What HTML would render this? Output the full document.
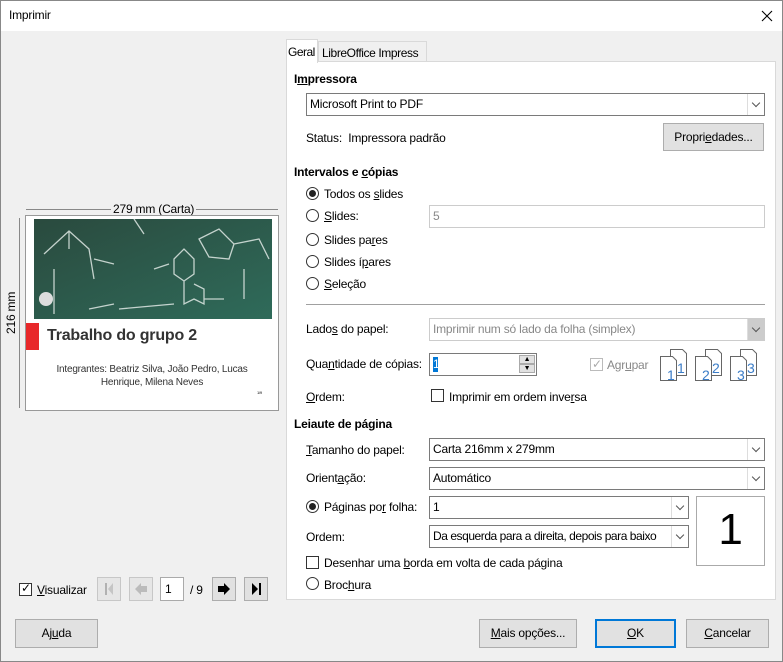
<!DOCTYPE html>
<html><head><meta charset="utf-8"><style>
*{box-sizing:border-box;margin:0;padding:0}
body{width:783px;height:662px;background:#f0f0f0;font-family:"Liberation Sans",sans-serif;font-size:12px;letter-spacing:-0.2px;color:#000;position:relative;overflow:hidden}
.a{position:absolute;white-space:nowrap}
.t{position:absolute;white-space:nowrap;line-height:14px}
.b{font-weight:bold}
.sel{position:absolute;background:#fff;border:1px solid #7a7a7a;height:23px;padding:3px 0 0 3px;line-height:15px;overflow:hidden}
.sel .ar{position:absolute;right:0;top:0;width:17px;height:21px;border-left:1px solid #ddd;background:#fff}
.sel .ar:after{content:"";position:absolute;left:5px;top:6px;width:5px;height:5px;border-right:1px solid #555;border-bottom:1px solid #555;transform:rotate(45deg)}
.dis{border-color:#ccc;color:#888}
.dis .ar{background:#ccc}
.btn{position:absolute;background:#e1e1e1;border:1px solid #adadad;text-align:center;line-height:27px}
.rad{position:absolute;width:13px;height:13px;border:1px solid #333;border-radius:50%;background:#fff}
.rad.on:after{content:"";position:absolute;left:2px;top:2px;width:7px;height:7px;border-radius:50%;background:#222}
.chk{position:absolute;width:13px;height:13px;border:1px solid #333;background:#fff}
.nb{position:absolute;width:24px;height:24px;border:1px solid #adadad;background:#e1e1e1}
u{text-decoration:underline}
</style></head><body>
<div class="a" style="left:0;top:0;width:783px;height:31px;background:#fff"></div>
<div class="t" style="left:9px;top:8px">Imprimir</div>
<svg class="a" style="left:761px;top:10px" width="12" height="12"><path d="M1 1L11 11M11 1L1 11" stroke="#000" stroke-width="1.1"/></svg>
<div class="a" style="left:0;top:0;width:783px;height:662px;border:1px solid #888"></div>

<!-- preview -->
<div class="a" style="left:26px;top:209px;width:252px;height:1px;background:#888"></div>
<div class="t" style="left:111px;top:202px;background:#f0f0f0;padding:0 2px">279 mm (Carta)</div>
<div class="a" style="left:19px;top:218px;width:1px;height:190px;background:#888"></div>
<div class="t" style="left:4px;top:336px;transform:rotate(-90deg);transform-origin:left top;background:#f0f0f0;padding:0 2px">216 mm</div>
<div class="a" style="left:25px;top:215px;width:254px;height:196px;border:1px solid #999;background:#fff"></div>
<svg class="a" style="left:34px;top:219px" width="238" height="100" viewBox="0 0 238 100">
<defs><linearGradient id="g" x1="0" y1="0" x2="1" y2="1"><stop offset="0" stop-color="#2a4a3e"/><stop offset="1" stop-color="#2f6b5a"/></linearGradient></defs>
<rect width="238" height="100" fill="url(#g)"/>
<g stroke="#dfe8e4" stroke-width="1.3" fill="none" opacity=".85">
<path d="M10 35 L35 12 L55 30 L60 60 M35 12 L35 30 M60 40 L80 45 M20 50 L20 95 M55 90 L80 85"/>
<path d="M140 40 L150 30 L160 40 L160 55 L150 62 L140 55 Z M150 62 L150 85 L160 80 L170 85 L170 70 L160 65 M170 80 L190 80"/>
<path d="M165 20 L185 10 L200 25 L195 40 L175 38 Z M200 25 L225 20 L235 40 M210 50 L210 80"/>
<path d="M100 0 L110 15 M120 50 L135 45 M85 90 L140 85"/>
</g>
<circle cx="12" cy="80" r="7" fill="#ddd"/>
</svg>
<div class="a" style="left:26px;top:323px;width:13px;height:27px;background:#e8282a"></div>
<div class="t b" style="left:47px;top:329px;font-size:16px;color:#333">Trabalho do grupo 2</div>
<div class="t" style="left:26px;width:252px;text-align:center;top:363px;font-size:10px;color:#333;line-height:13px;white-space:normal;padding:0 20px">Integrantes: Beatriz Silva, João Pedro, Lucas Henrique, Milena Neves</div>
<div class="t" style="left:257px;top:386px;font-size:4px">1/9</div>

<div class="chk" style="left:19px;top:583px"></div><div class="t" style="left:21px;top:581px">✓</div>
<div class="t" style="left:37px;top:583px"><u>V</u>isualizar</div>
<div class="nb" style="left:97px;top:577px;opacity:.6"><div class="a" style="left:7px;top:5px;width:2px;height:12px;background:#888"></div><div class="a" style="left:10px;top:5px;border:6px solid transparent;border-right:5px solid #aaa;border-left:0"></div></div>
<div class="nb" style="left:129px;top:577px;opacity:.6"><svg class="a" style="left:3px;top:3px" width="16" height="16"><path d="M2 8L8 2V5H14V11H8V14Z" fill="#999"/></svg></div>
<div class="a" style="left:160px;top:577px;width:24px;height:24px;background:#fff;border:1px solid #aaa;padding:4px 0 0 4px">1</div>
<div class="t" style="left:190px;top:583px">/ 9</div>
<div class="nb" style="left:212px;top:577px"><svg class="a" style="left:3px;top:3px" width="16" height="16"><path d="M14 8L8 2V5H2V11H8V14Z" fill="#000"/></svg></div>
<div class="nb" style="left:244px;top:577px"><div class="a" style="left:7px;top:5px;border:6px solid transparent;border-left:6px solid #000;border-right:0"></div><div class="a" style="left:14px;top:5px;width:2px;height:12px;background:#000"></div></div>

<!-- tabs -->
<div class="a" style="left:318px;top:41px;width:109px;height:21px;border:1px solid #d9d9d9;background:#f0f0f0"></div>
<div class="t" style="left:322px;top:46px;letter-spacing:-0.4px">LibreOffice Impress</div>
<div class="a" style="left:286px;top:61px;width:490px;height:539px;background:#fff;border:1px solid #d9d9d9"></div>
<div class="a" style="left:286px;top:39px;width:32px;height:24px;background:#fff;border:1px solid #d9d9d9;border-bottom:0"></div>
<div class="t" style="left:288px;top:45px;letter-spacing:-0.5px">Geral</div>

<div class="t b" style="left:294px;top:72px">I<u>m</u>pressora</div>
<div class="sel" style="left:306px;top:93px;width:459px">Microsoft Print to PDF<div class="ar"></div></div>
<div class="t" style="left:306px;top:131px">Status:&nbsp; Impressora padrão</div>
<div class="btn" style="left:663px;top:123px;width:101px;height:28px">Propri<u>e</u>dades...</div>

<div class="t b" style="left:294px;top:165px">Intervalos e <u>c</u>ópias</div>
<div class="rad on" style="left:306px;top:187px"></div><div class="t" style="left:324px;top:187px">Todos os <u>s</u>lides</div>
<div class="rad" style="left:306px;top:209px"></div><div class="t" style="left:324px;top:209px"><u>S</u>lides:</div>
<div class="sel" style="left:429px;top:205px;width:336px;border-color:#ccc;color:#888">5</div>
<div class="rad" style="left:306px;top:233px"></div><div class="t" style="left:324px;top:233px">Slides pa<u>r</u>es</div>
<div class="rad" style="left:306px;top:255px"></div><div class="t" style="left:324px;top:255px">Slides í<u>p</u>ares</div>
<div class="rad" style="left:306px;top:277px"></div><div class="t" style="left:324px;top:277px"><u>S</u>eleção</div>
<div class="a" style="left:306px;top:304px;width:459px;height:1px;background:#a0a0a0"></div>

<div class="t" style="left:306px;top:322px">Lado<u>s</u> do papel:</div>
<div class="sel dis" style="left:429px;top:318px;width:336px">Imprimir num só lado da folha (simplex)<div class="ar"></div></div>
<div class="t" style="left:306px;top:357px">Qua<u>n</u>tidade de cópias:</div>
<div class="a" style="left:429px;top:353px;width:108px;height:23px;background:#fff;border:1px solid #7a7a7a"></div>
<div class="a" style="left:433px;top:357px;width:5px;height:15px;background:#0078d7;color:#fff;line-height:15px;font-size:12px">1</div>
<div class="a" style="left:519px;top:355px;width:16px;height:9px;background:#e1e1e1;border:1px solid #aaa;font-size:7px;text-align:center;line-height:8px">▲</div>
<div class="a" style="left:519px;top:364px;width:16px;height:9px;background:#e1e1e1;border:1px solid #aaa;font-size:7px;text-align:center;line-height:8px">▼</div>
<div class="chk" style="left:590px;top:358px;border-color:#bbb"></div><div class="t" style="left:592px;top:357px;color:#aaa">✓</div>
<div class="t" style="left:607px;top:358px;color:#888">Agr<u>u</u>par</div>
<svg class="a" style="left:658px;top:346px" width="110" height="36">
<g fill="#fff" stroke="#666" stroke-width="1">
<path d="M12.5 3.5h12l4 4v22h-16z"/><path d="M2.5 10.5h12l4 4v20h-16z"/>
<path d="M47.5 3.5h12l4 4v22h-16z"/><path d="M37.5 10.5h12l4 4v20h-16z"/>
<path d="M82.5 3.5h12l4 4v22h-16z"/><path d="M72.5 10.5h12l4 4v20h-16z"/>
</g>
<g fill="#3a7cc7" font-family="Liberation Sans" font-size="14"><text x="19" y="27">1</text><text x="9" y="34">1</text><text x="54" y="27">2</text><text x="44" y="34">2</text><text x="89" y="27">3</text><text x="79" y="34">3</text></g>
</svg>
<div class="t" style="left:306px;top:390px"><u>O</u>rdem:</div>
<div class="chk" style="left:431px;top:389px"></div><div class="t" style="left:449px;top:390px">Imprimir em ordem inve<u>r</u>sa</div>

<div class="t b" style="left:294px;top:417px">Leiaute de página</div>
<div class="t" style="left:306px;top:443px"><u>T</u>amanho do papel:</div>
<div class="sel" style="left:429px;top:438px;width:336px">Carta 216mm x 279mm<div class="ar"></div></div>
<div class="t" style="left:306px;top:471px">Orient<u>a</u>ção:</div>
<div class="sel" style="left:429px;top:467px;width:336px">Automático<div class="ar"></div></div>
<div class="rad on" style="left:306px;top:500px"></div><div class="t" style="left:324px;top:500px">Páginas po<u>r</u> folha:</div>
<div class="sel" style="left:429px;top:496px;width:260px">1<div class="ar"></div></div>
<div class="a" style="left:696px;top:496px;width:69px;height:70px;border:1px solid #aaa;background:#fff;font-size:44px;text-align:center;line-height:66px">1</div>
<div class="t" style="left:306px;top:530px">Ordem:</div>
<div class="sel" style="left:429px;top:525px;width:260px;letter-spacing:-0.45px">Da esquerda para a direita, depois para baixo<div class="ar"></div></div>
<div class="chk" style="left:306px;top:556px"></div><div class="t" style="left:324px;top:556px">Desenhar uma <u>b</u>orda em volta de cada página</div>
<div class="rad" style="left:306px;top:577px"></div><div class="t" style="left:324px;top:578px">Broc<u>h</u>ura</div>

<div class="btn" style="left:15px;top:619px;width:83px;height:29px">Aj<u>u</u>da</div>
<div class="btn" style="left:479px;top:619px;width:98px;height:29px"><u>M</u>ais opções...</div>
<div class="btn" style="left:595px;top:619px;width:81px;height:29px;border:2px solid #0078d7;line-height:25px"><u>O</u>K</div>
<div class="btn" style="left:686px;top:619px;width:83px;height:29px"><u>C</u>ancelar</div>
</body></html>
